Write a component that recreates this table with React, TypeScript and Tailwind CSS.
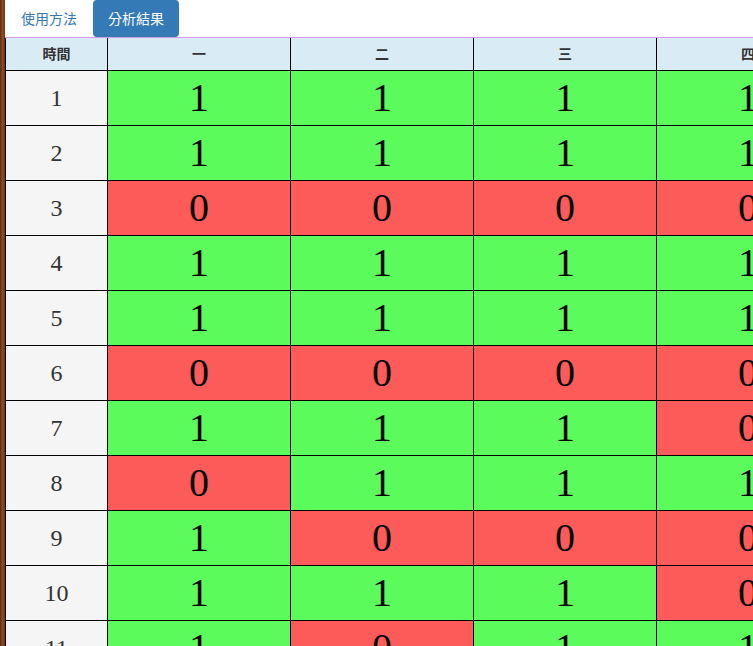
import React from "react";

const days = ["一", "二", "三", "四"];

const rows: number[][] = [
  [1, 1, 1, 1],
  [1, 1, 1, 1],
  [0, 0, 0, 0],
  [1, 1, 1, 1],
  [1, 1, 1, 1],
  [0, 0, 0, 0],
  [1, 1, 1, 0],
  [0, 1, 1, 1],
  [1, 0, 0, 0],
  [1, 1, 1, 0],
  [1, 0, 1, 1],
];

const sans = "font-['Noto_Sans_CJK_TC','Noto_Sans',sans-serif]";
const serif = "font-['Liberation_Serif',serif]";

export default function App() {
  return (
    <div className="flex h-[646px] w-[753px] overflow-hidden bg-white">
      {/* wood frame edge */}
      <div className="w-[5px] shrink-0 bg-gradient-to-r from-[#5e2c10] via-[#8a4a22] to-[#6d3515]" />

      <div className="flex min-w-0 flex-1 flex-col">
        {/* tabs */}
        <div className={`flex h-[38px] items-start gap-[3px] pl-[3px] ${sans}`}>
          <button className="flex h-[37px] items-center px-[13px] text-[14px] text-[#337ab7]">
            使用方法
          </button>
          <button className="flex h-[37px] items-center rounded-[4px] bg-[#337ab7] px-[15px] text-[14px] text-white">
            分析結果
          </button>
        </div>

        <div className="border-t border-[#d49ae6]">
          <table className="w-[835px] table-fixed border-collapse">
            <colgroup>
              <col className="w-[102px]" />
              <col className="w-[183px]" />
              <col className="w-[183px]" />
              <col className="w-[183px]" />
              <col className="w-[183px]" />
            </colgroup>
            <thead>
              <tr className="h-[32px] bg-[#d9ebf5]">
                <th className={`border-x border-b border-black text-[14px] font-bold text-[#333] ${sans}`}>
                  時間
                </th>
                {days.map((d) => (
                  <th
                    key={d}
                    className={`border-x border-b border-black text-[14px] font-bold text-[#333] ${sans}`}
                  >
                    {d}
                  </th>
                ))}
              </tr>
            </thead>
            <tbody>
              {rows.map((r, i) => (
                <tr key={i} className="h-[55px]">
                  <td className={`border border-black bg-[#f5f5f5] text-center text-[24px] text-[#333] ${serif}`}>
                    {i + 1}
                  </td>
                  {r.map((v, j) => (
                    <td
                      key={j}
                      className={`border border-black text-center text-[40px] leading-none text-black ${serif} ${
                        v ? "bg-[#5afb5a]" : "bg-[#fd5a5a]"
                      }`}
                    >
                      {v}
                    </td>
                  ))}
                </tr>
              ))}
            </tbody>
          </table>
        </div>
      </div>
    </div>
  );
}
